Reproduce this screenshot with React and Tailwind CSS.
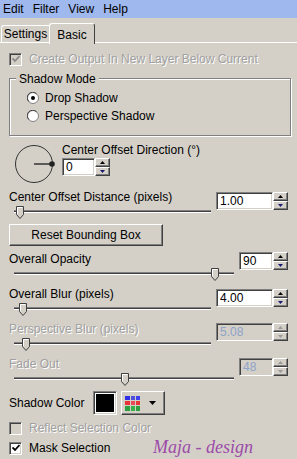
import React from 'react';

const font = { fontFamily: '"Liberation Sans", Arial, sans-serif' };

// sunken 3d edge used by inputs, checkboxes and the colour swatch
const sunken =
  'border border-t-[#808080] border-l-[#808080] border-b-white border-r-white shadow-[inset_1px_1px_0_#404040,inset_-1px_-1px_0_#d4d0c8]';
const raised =
  'border border-t-white border-l-white border-b-[#404040] border-r-[#404040] shadow-[inset_-1px_-1px_0_#808080] bg-[#d4d0c8]';
const grayText = 'text-[#a0a0a0] [text-shadow:1px_1px_0_#fff]';

const Arrow = ({ up, disabled }) => (
  <svg width="5" height="3" viewBox="0 0 5 3">
    <path d={up ? 'M2.5 0 L5 3 L0 3 Z' : 'M0 0 L5 0 L2.5 3 Z'} fill={disabled ? '#9a9a9a' : up ? '#000' : '#1a1a6e'} />
  </svg>
);

const Spin = ({ disabled }) => (
  <div className="flex flex-col w-[15px]">
    <div className={`${raised} h-[9px] flex items-center justify-center`}>
      <Arrow up disabled={disabled} />
    </div>
    <div className={`${raised} h-[9px] flex items-center justify-center`}>
      <Arrow disabled={disabled} />
    </div>
  </div>
);

const NumberField = ({ value, width, disabled }) => (
  <div className="flex">
    <div
      className={`${sunken} h-[18px] flex items-center pl-[3px] text-[12px] ${
        disabled ? 'bg-[#d4d0c8] text-[#8da3c9]' : 'bg-white text-black'
      }`}
      style={{ width }}
    >
      {value}
    </div>
    <Spin disabled={disabled} />
  </div>
);

const Slider = ({ width, pos }) => (
  <div className="relative h-[16px] ml-[5px]" style={{ width }}>
    <div className="absolute left-0 right-0 top-[6px] h-[3px] border-t border-t-[#808080] border-b border-b-white bg-[#404040]" />
    <div className="absolute top-[2px]" style={{ left: pos }}>
      <svg width="8" height="13" viewBox="0 0 8 13">
        <path d="M0.5 0.5 H7.5 V8.5 L4 12.5 L0.5 8.5 Z" fill="#d4d0c8" stroke="#404040" />
        <path d="M1.5 8 V1.5 H6.5" fill="none" stroke="#fff" />
      </svg>
    </div>
  </div>
);

const Check = ({ checked, disabled, label }) => (
  <div className={`flex items-center gap-[7px] text-[12px] h-[14px] ${disabled ? grayText : 'text-black'}`}>
    <div className={`${sunken} w-[13px] h-[13px] flex items-center justify-center ${disabled ? 'bg-[#d4d0c8]' : 'bg-white'}`}>
      {checked && (
        <svg width="8" height="8" viewBox="0 0 8 8">
          <path d="M0.5 3.5 L3 6 L7.5 1" fill="none" stroke={disabled ? '#8a8a8a' : '#000'} strokeWidth="1.8" />
        </svg>
      )}
    </div>
    <span>{label}</span>
  </div>
);

const Radio = ({ checked, label }) => (
  <div className="flex items-center gap-[6px] text-[12px] text-black h-[18px]">
    <svg width="12" height="12" viewBox="0 0 12 12">
      <circle cx="6" cy="6" r="5.5" fill="#fff" stroke="#808080" />
      <path d="M1.8 9.5 A5 5 0 0 1 9.5 1.8" fill="none" stroke="#404040" />
      {checked && <circle cx="6" cy="6" r="2" fill="#000" />}
    </svg>
    <span>{label}</span>
  </div>
);

const SliderRow = ({ label, value, inputWidth, sliderWidth, pos, disabled, rowClass, inputClass }) => (
  <div className={`flex items-start ${rowClass}`}>
    <div>
      <div className={`leading-[14px] ${disabled ? grayText : ''}`}>{label}</div>
      <Slider width={sliderWidth} pos={pos} />
    </div>
    <div className={`ml-auto ${inputClass}`}>
      <NumberField value={value} width={inputWidth} disabled={disabled} />
    </div>
  </div>
);

export default function App() {
  return (
    <div className="w-[297px] h-[459px] bg-[#d4d0c8] overflow-hidden text-[12px] text-black" style={font}>
      {/* menu */}
      <div className="h-[18px] bg-[#9fb8ee] flex items-center pl-[3px] gap-[9px]">
        <span>Edit</span>
        <span>Filter</span>
        <span>View</span>
        <span>Help</span>
      </div>

      {/* tabs */}
      <div className="relative h-[25px] flex items-end pl-[1px]">
        <div className="absolute left-0 right-0 bottom-0 h-px bg-white" />
        <div className="relative h-[18px] w-[49px] border-t border-l border-white border-r border-r-[#808080] rounded-tl-[3px] flex items-center justify-center pb-[1px]">
          Settings
        </div>
        <div className="relative h-[21px] w-[46px] -ml-[1px] bg-[#d4d0c8] border-t border-l border-white border-r border-r-[#404040] rounded-t-[3px] flex items-start justify-center pt-[2px] z-10 mb-[-1px]">
          Basic
        </div>
      </div>

      <div className="px-[9px]">
        <div className="mt-[9px]">
          <Check checked disabled label="Create Output In New Layer Below Current" />
        </div>

        {/* shadow mode group */}
        <div className="relative mt-[12px] h-[58px] w-[282px] border border-[#808080] shadow-[1px_1px_0_#fff,inset_1px_1px_0_#fff]">
          <span className="absolute -top-[7px] left-[6px] bg-[#d4d0c8] px-[3px] leading-[14px]">Shadow Mode</span>
          <div className="pl-[17px] pt-[10px]">
            <Radio checked label="Drop Shadow" />
            <Radio label="Perspective Shadow" />
          </div>
        </div>

        {/* direction */}
        <div className="flex mt-[7px]">
          <svg width="42" height="42" viewBox="0 0 42 42" className="ml-[4px]">
            <circle cx="21" cy="21" r="18.5" fill="none" stroke="#333" strokeWidth="1" />
            <line x1="21" y1="21" x2="39" y2="21" stroke="#333" strokeWidth="1.5" />
            <circle cx="39" cy="21" r="2.8" fill="#222" />
          </svg>
          <div className="ml-[7px]">
            <div className="leading-[14px]">Center Offset Direction (°)</div>
            <div className="mt-[1px]">
              <NumberField value="0" width={33} />
            </div>
          </div>
        </div>

        <SliderRow
          label="Center Offset Distance (pixels)"
          value="1.00"
          inputWidth={57}
          sliderWidth={197}
          pos={2}
          rowClass="mt-[5px]"
          inputClass="mt-[2px]"
        />

        <button className={`${raised} mt-[4px] w-[154px] h-[22px] flex items-center justify-center text-[12px]`}>
          Reset Bounding Box
        </button>

        <SliderRow
          label="Overall Opacity"
          value="90"
          inputWidth={34}
          sliderWidth={220}
          pos={197}
          rowClass="mt-[6px]"
          inputClass="mt-0"
        />

        <SliderRow
          label="Overall Blur (pixels)"
          value="4.00"
          inputWidth={57}
          sliderWidth={197}
          pos={5}
          rowClass="mt-[5px]"
          inputClass="mt-[2px]"
        />

        <SliderRow
          label="Perspective Blur (pixels)"
          value="5.08"
          inputWidth={57}
          sliderWidth={197}
          pos={8}
          disabled
          rowClass="mt-[5px]"
          inputClass="mt-[1px]"
        />

        <SliderRow
          label="Fade Out"
          value="48"
          inputWidth={34}
          sliderWidth={220}
          pos={107}
          disabled
          rowClass="mt-[5px]"
          inputClass="mt-[1px]"
        />

        {/* shadow color */}
        <div className="flex items-center mt-[4px] h-[24px]">
          <span>Shadow Color</span>
          <div className={`${sunken} ml-[9px] w-[24px] h-[24px] p-[2px] bg-white`}>
            <div className="w-full h-full bg-black" />
          </div>
          <div className={`${raised} ml-[4px] w-[44px] h-[24px] flex items-center pl-[3px] gap-[5px]`}>
            <div className="grid grid-cols-3 gap-px w-[15px] h-[15px] bg-[#d4d0c8]">
              <div className="bg-[#2f2fe8]" />
              <div className="bg-[#5050d8]" />
              <div className="bg-[#4040f0]" />
              <div className="bg-[#e83434]" />
              <div className="bg-[#e84a5a]" />
              <div className="bg-[#e83434]" />
              <div className="bg-[#2fa040]" />
              <div className="bg-[#38b048]" />
              <div className="bg-[#2fa040]" />
            </div>
            <svg width="7" height="4" viewBox="0 0 7 4" className="ml-[4px]">
              <path d="M0 0 H7 L3.5 4 Z" fill="#000" />
            </svg>
          </div>
        </div>

        <div className="mt-[6px]">
          <Check disabled label="Reflect Selection Color" />
        </div>
        <div className="relative mt-[6px]">
          <Check checked label="Mask Selection" />
          {/* watermark */}
          <span
            className="absolute left-[144px] -top-[5px] text-[18px] leading-[22px] italic text-[#9c4aa8]"
            style={{ fontFamily: '"Liberation Serif", "DejaVu Serif", serif' }}
          >
            Maja - design
          </span>
        </div>
      </div>
    </div>
  );
}
